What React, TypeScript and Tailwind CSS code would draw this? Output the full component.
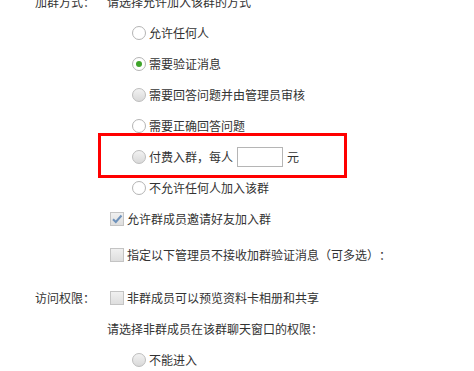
import React from "react";

type RadioKind = "empty" | "checked" | "gray";

function Radio({ kind }: { kind: RadioKind }) {
  if (kind === "checked") {
    return (
      <span className="flex h-[14px] w-[14px] shrink-0 items-center justify-center rounded-full border border-[#b4b4b4] bg-white">
        <span className="h-[6px] w-[6px] rounded-full bg-[#3fa42a]" />
      </span>
    );
  }
  if (kind === "gray") {
    return (
      <span className="h-[14px] w-[14px] shrink-0 rounded-full border border-[#bdbdbd] bg-gradient-to-b from-[#f2f2f2] to-[#d9d9d9]" />
    );
  }
  return <span className="h-[14px] w-[14px] shrink-0 rounded-full border border-[#b4b4b4] bg-white" />;
}

function Check({ checked }: { checked?: boolean }) {
  return (
    <span className="flex h-[14px] w-[14px] shrink-0 items-center justify-center border border-[#c4c4c4] bg-gradient-to-b from-[#f0f0f0] to-[#dedede]">
      {checked && (
        <svg width="12" height="12" viewBox="0 0 12 12">
          <path d="M2 6.2 L4.8 9 L10.5 2.5" fill="none" stroke="#6e92bb" strokeWidth="2" />
        </svg>
      )}
    </span>
  );
}

function RadioRow({ kind, children }: { kind: RadioKind; children: React.ReactNode }) {
  return (
    <div className="flex h-[31px] items-center gap-[3px] pl-[25px]">
      <Radio kind={kind} />
      <span>{children}</span>
    </div>
  );
}

export default function App() {
  return (
    <div
      className="-mt-[14px] h-[385px] w-[474px] overflow-hidden bg-white pl-[35px] text-[12px] leading-[16px] text-[#333] [text-spacing-trim:space-all]"
      style={{ fontFamily: '"Noto Sans CJK SC", "Microsoft YaHei", sans-serif' }}
    >
      <div className="flex">
        <div className="flex h-[31px] w-[72px] shrink-0 items-center">加群方式：</div>
        <div className="flex flex-col">
          <div className="flex h-[31px] items-center">请选择允许加入该群的方式</div>
          <RadioRow kind="empty">允许任何人</RadioRow>
          <RadioRow kind="checked">需要验证消息</RadioRow>
          <RadioRow kind="gray">需要回答问题并由管理员审核</RadioRow>
          <RadioRow kind="empty">需要正确回答问题</RadioRow>
          <div className="relative flex h-[31px] items-center gap-[3px] pl-[25px]">
            <div className="pointer-events-none absolute left-[-9px] top-[-8px] h-[45px] w-[249px] border-[3px] border-[#ff0000]" />
            <Radio kind="gray" />
            <span>付费入群，每人</span>
            <span className="ml-[1px] h-[20px] w-[46px] border border-[#b5b5b5] bg-white" />
            <span className="ml-[1px]">元</span>
          </div>
          <RadioRow kind="empty">不允许任何人加入该群</RadioRow>
          <div className="flex h-[31px] items-center gap-[3px] pl-[3px]">
            <Check checked />
            <span>允许群成员邀请好友加入群</span>
          </div>
          <div className="mt-[5px] flex h-[31px] items-center gap-[3px] pl-[3px]">
            <Check />
            <span>指定以下管理员不接收加群验证消息（可多选）：</span>
          </div>
        </div>
      </div>
      <div className="mt-[12px] flex">
        <div className="flex h-[31px] w-[72px] shrink-0 items-center">访问权限：</div>
        <div className="flex flex-col">
          <div className="flex h-[31px] items-center gap-[3px] pl-[3px]">
            <Check />
            <span>非群成员可以预览资料卡相册和共享</span>
          </div>
          <div className="flex h-[31px] items-center">请选择非群成员在该群聊天窗口的权限：</div>
          <RadioRow kind="gray">不能进入</RadioRow>
        </div>
      </div>
    </div>
  );
}
